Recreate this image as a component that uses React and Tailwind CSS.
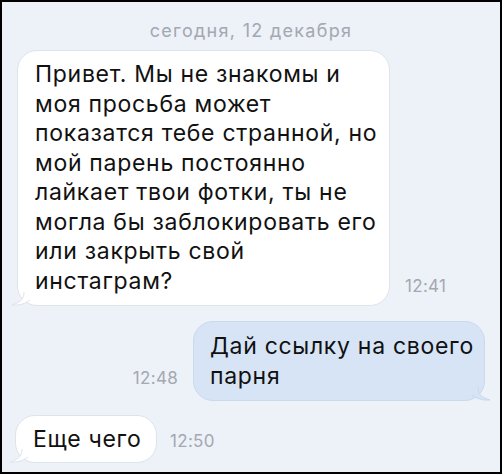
import React from "react";

const font = { fontFamily: 'Inter, "Liberation Sans", Arial, sans-serif' };

function TailLeft({ fill, stroke }) {
  return (
    <svg className="absolute left-[-8px] bottom-[-1px]" width="22" height="22" viewBox="0 0 22 22">
      <path d="M14 0 L14 8 C14 14 12 18 2 21 C9 21.5 15 20 20 16 L22 0 Z" fill={fill} />
      <path d="M14 8 C14 14 12 18 2 21 C9 21.5 15 20 20 16" fill="none" stroke={stroke} strokeWidth="1" />
    </svg>
  );
}

function TailRight({ fill, stroke }) {
  return (
    <svg className="absolute right-[-8px] bottom-[-1px]" width="22" height="22" viewBox="0 0 22 22">
      <path d="M8 0 L8 8 C8 14 10 18 20 21 C13 21.5 7 20 2 16 L0 0 Z" fill={fill} />
      <path d="M8 8 C8 14 10 18 20 21 C13 21.5 7 20 2 16" fill="none" stroke={stroke} strokeWidth="1" />
    </svg>
  );
}

export default function App() {
  return (
    <div
      style={font}
      className="w-[502px] h-[474px] border-2 border-black bg-[#edf1f8] flex flex-col overflow-hidden"
    >
      <div className="pt-[19px] text-center text-[18px] leading-[20px] tracking-[1.3px] text-[#a3a8b1]">
        сегодня, 12 декабря
      </div>

      <div className="mt-[9px] pl-[15px] flex items-end gap-[15px]">
        <div className="relative w-[373px] bg-white border border-[#dfe3ea] rounded-[20px] px-[17px] py-[9px] text-[23px] leading-[29.5px] tracking-[0.7px] text-[#111] whitespace-nowrap">
          <TailLeft fill="#ffffff" stroke="#dfe3ea" />
          <div className="relative">
            Привет. Мы не знакомы и<br />
            моя просьба может<br />
            показатся тебе странной, но<br />
            мой парень постоянно<br />
            лайкает твои фотки, ты не<br />
            могла бы заблокировать его<br />
            или закрыть свой<br />
            инстаграм?
          </div>
        </div>
        <div className="mb-[10px] text-[17px] leading-[20px] tracking-[0.3px] text-[#a3a8b1]">12:41</div>
      </div>

      <div className="mt-[15px] pr-[15px] flex items-end justify-end gap-[15px]">
        <div className="mb-[13px] text-[17px] leading-[20px] tracking-[0.3px] text-[#a3a8b1]">12:48</div>
        <div className="relative w-[292px] bg-[#d6e4f6] border border-[#cbd9ec] rounded-[20px] px-[16px] py-[9px] text-[23px] leading-[30px] tracking-[0.7px] text-[#111] whitespace-nowrap">
          <TailRight fill="#d6e4f6" stroke="#cbd9ec" />
          <div className="relative">
            Дай ссылку на своего<br />
            парня
          </div>
        </div>
      </div>

      <div className="mt-[14px] pl-[13px] flex items-end gap-[13px]">
        <div className="relative w-[142px] bg-white border border-[#dfe3ea] rounded-[20px] px-[17px] py-[8px] text-[23px] leading-[30px] tracking-[0.7px] text-[#111] whitespace-nowrap">
          <TailLeft fill="#ffffff" stroke="#dfe3ea" />
          <div className="relative">Еще чего</div>
        </div>
        <div className="mb-[12px] text-[17px] leading-[20px] tracking-[0.3px] text-[#a3a8b1]">12:50</div>
      </div>
    </div>
  );
}
